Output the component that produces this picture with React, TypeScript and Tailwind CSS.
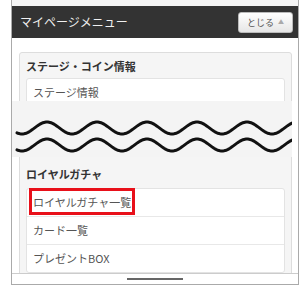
import React from "react";

function wave(cy: number, x0: number, x1: number) {
  const pts: string[] = [];
  for (let x = x0; x <= x1; x += 1) {
    const y = cy - 6 * Math.cos((2 * Math.PI * (x - 35)) / 50);
    pts.push(`${x === x0 ? "M" : "L"}${x},${y.toFixed(2)}`);
  }
  return pts.join(" ");
}

const font = { fontFamily: '"Noto Sans CJK JP", "Noto Sans", sans-serif' };

function Item({ label, highlight }: { label: string; highlight?: boolean }) {
  return (
    <div className="relative h-[27px] flex items-center pl-[6px] text-[11px] text-[#555] leading-none">
      {label}
      {highlight && (
        <div className="absolute left-[2px] top-[-1px] w-[106px] h-[27px] border-[3px] border-[#e8101a]" />
      )}
    </div>
  );
}

export default function App() {
  return (
    <div className="w-[305px] h-[287px] bg-white overflow-hidden" style={font}>
      <div className="ml-[11px] w-[288px] border-x border-b border-[#aaa] bg-white">
        <div className="h-[6px] bg-[#f4f4f4]" />
        <div className="h-[32px] bg-[#333] flex items-center justify-between pl-[8px] pr-[5px]">
          <span className="text-[12px] text-[#f0f0f0] leading-none">マイページメニュー</span>
          <div className="w-[55px] h-[21px] rounded-[3px] border border-[#bbb] bg-gradient-to-b from-white to-[#e6e6e6] flex items-center justify-center gap-[4px]">
            <span className="text-[9px] text-[#555] leading-none">とじる</span>
            <span className="text-[6px] text-[#aaa] leading-none">▲</span>
          </div>
        </div>
        <div className="h-[63px] overflow-hidden pt-[14px]">
          <div className="ml-[7px] w-[273px] border border-[#ddd] rounded-[3px] bg-[#f5f5f5] px-[6px] pt-[6px] pb-[6px]">
            <div className="text-[11px] font-bold text-[#333] leading-[14px]">ステージ・コイン情報</div>
            <div className="mt-[5px] bg-white border border-[#e3e3e3] rounded-[3px]">
              <Item label="ステージ情報" />
            </div>
          </div>
        </div>
        <div className="w-[280px] h-[56px] bg-[#f4f4f4]">
          <svg width="280" height="56" viewBox="0 0 280 56">
            <path d={wave(27, 5, 280)} fill="none" stroke="#111" strokeWidth="3" strokeLinecap="round" strokeLinejoin="round" />
            <path d={wave(44, 5, 280)} fill="none" stroke="#111" strokeWidth="3" strokeLinecap="round" strokeLinejoin="round" />
          </svg>
        </div>
        <div className="h-[116px] overflow-hidden">
          <div className="ml-[7px] w-[273px] h-[116px] border-x border-[#ddd] bg-[#f5f5f5] px-[6px] pt-[10px]">
            <div className="text-[11px] font-bold text-[#333] leading-[14px]">ロイヤルガチャ</div>
            <div className="mt-[7px] bg-white border border-[#e3e3e3] rounded-[3px]">
              <Item label="ロイヤルガチャ一覧" highlight />
              <div className="border-t border-[#e8e8e8]" />
              <Item label="カード一覧" />
              <div className="border-t border-[#e8e8e8]" />
              <Item label="プレゼントBOX" />
            </div>
          </div>
        </div>
        <div className="border-t border-[#ccc] h-[11px] pt-[4px]">
          <div className="mx-auto w-[56px] h-[2px] bg-[#666]" />
        </div>
      </div>
    </div>
  );
}
